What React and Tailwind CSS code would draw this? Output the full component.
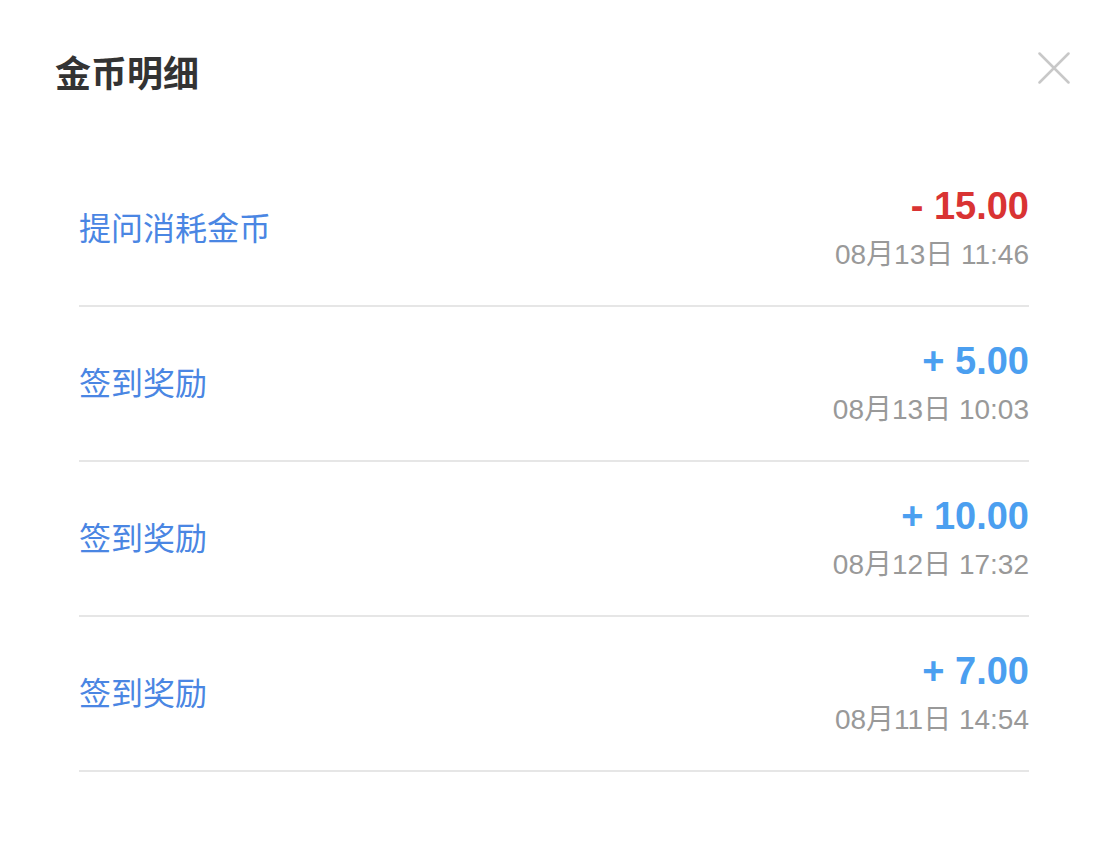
const records = [
  { title: '提问消耗金币', amount: '- 15.00', time: '08月13日 11:46', negative: true },
  { title: '签到奖励', amount: '+ 5.00', time: '08月13日 10:03' },
  { title: '签到奖励', amount: '+ 10.00', time: '08月12日 17:32' },
  { title: '签到奖励', amount: '+ 7.00', time: '08月11日 14:54' },
];

export default function App() {
  return (
    <div
      className="w-[1098px] h-[848px] bg-white overflow-hidden"
      style={{ fontFamily: '"Liberation Sans", "Noto Sans CJK SC", sans-serif' }}
    >
      {/* Header */}
      <div className="flex items-start justify-between pl-[55px] pr-[28px] pt-[52px]">
        <h2 className="text-[36px] leading-[50px] font-bold text-[#333333] -mt-[2px]">金币明细</h2>
        <button className="w-[32px] h-[32px]">
          <svg viewBox="0 0 32 32" className="w-[32px] h-[32px]" fill="none" stroke="#c8c8c8" strokeWidth="2.5" strokeLinecap="round">
            <path d="M1.5 1.5 L30.5 30.5 M30.5 1.5 L1.5 30.5" />
          </svg>
        </button>
      </div>

      {/* Records */}
      <div className="ml-[79px] mr-[69px] mt-[52px]">
        {records.map((r, i) => (
          <div key={i} className="h-[155px] flex items-center justify-between border-b-2 border-[#e6e6e6]">
            <span className="text-[32px] text-[#4a86e3]">{r.title}</span>
            <div className="flex flex-col items-end pt-[4px]">
              <span className={`text-[38px] leading-[46px] font-bold ${r.negative ? 'text-[#d93333]' : 'text-[#4b9ff0]'}`}>
                {r.amount}
              </span>
              <span className="text-[28px] leading-[48px] mt-[2px] text-[#999999]">{r.time}</span>
            </div>
          </div>
        ))}
      </div>
    </div>
  );
}
